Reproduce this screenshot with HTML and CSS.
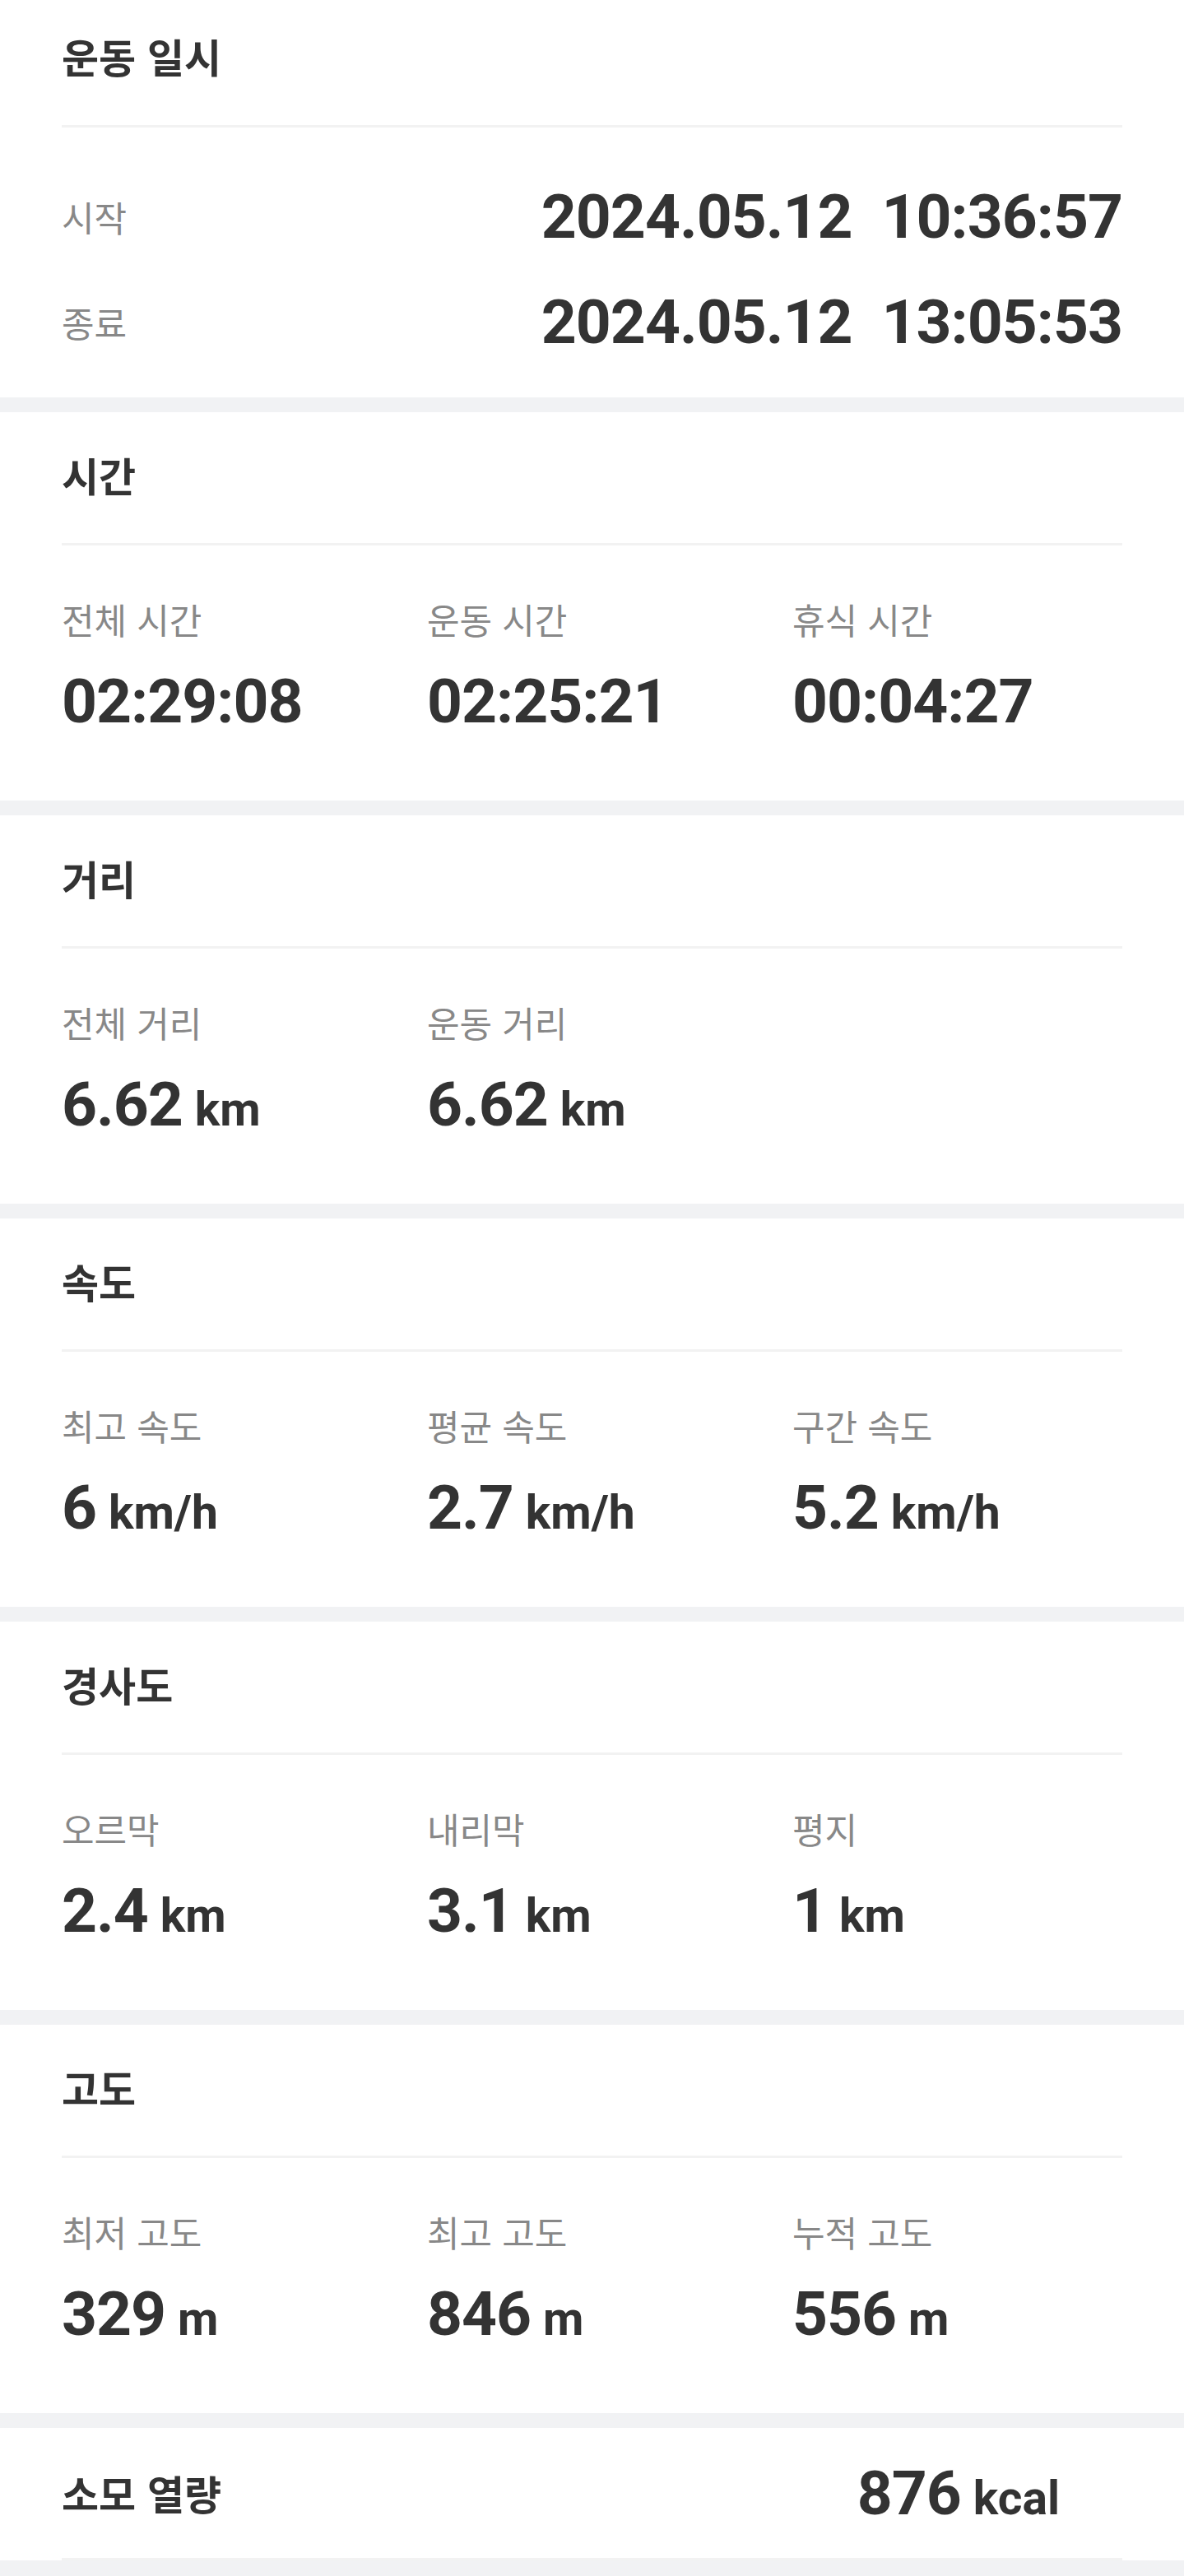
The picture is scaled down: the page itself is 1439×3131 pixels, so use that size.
FILE: index.html
```html
<!DOCTYPE html>
<html lang="ko">
<head>
<meta charset="utf-8">
<title>운동 기록</title>
<link rel="stylesheet" href="styles.css">
</head>
<body>
<main class="page">
  <section class="card card--first">
    <header class="card__head"><h2 class="card__title">운동 일시</h2></header>
    <div class="card__rule"></div>
    <div class="dates">
      <div class="dates__row">
        <span class="label">시작</span>
        <span class="datetime"><span class="num">2024.05.12</span><span class="num">10:36:57</span></span>
      </div>
      <div class="dates__row">
        <span class="label">종료</span>
        <span class="datetime"><span class="num">2024.05.12</span><span class="num">13:05:53</span></span>
      </div>
    </div>
  </section>

  <section class="card">
    <header class="card__head"><h2 class="card__title">시간</h2></header>
    <div class="card__rule"></div>
    <div class="stats">
      <div class="stat"><div class="label">전체 시간</div><div class="value"><span class="num">02:29:08</span></div></div>
      <div class="stat"><div class="label">운동 시간</div><div class="value"><span class="num">02:25:21</span></div></div>
      <div class="stat"><div class="label">휴식 시간</div><div class="value"><span class="num">00:04:27</span></div></div>
    </div>
  </section>

  <section class="card">
    <header class="card__head"><h2 class="card__title">거리</h2></header>
    <div class="card__rule"></div>
    <div class="stats">
      <div class="stat"><div class="label">전체 거리</div><div class="value"><span class="num">6.62</span><span class="unit">km</span></div></div>
      <div class="stat"><div class="label">운동 거리</div><div class="value"><span class="num">6.62</span><span class="unit">km</span></div></div>
    </div>
  </section>

  <section class="card">
    <header class="card__head"><h2 class="card__title">속도</h2></header>
    <div class="card__rule"></div>
    <div class="stats">
      <div class="stat"><div class="label">최고 속도</div><div class="value"><span class="num">6</span><span class="unit">km/h</span></div></div>
      <div class="stat"><div class="label">평균 속도</div><div class="value"><span class="num">2.7</span><span class="unit">km/h</span></div></div>
      <div class="stat"><div class="label">구간 속도</div><div class="value"><span class="num">5.2</span><span class="unit">km/h</span></div></div>
    </div>
  </section>

  <section class="card">
    <header class="card__head"><h2 class="card__title">경사도</h2></header>
    <div class="card__rule"></div>
    <div class="stats">
      <div class="stat"><div class="label">오르막</div><div class="value"><span class="num">2.4</span><span class="unit">km</span></div></div>
      <div class="stat"><div class="label">내리막</div><div class="value"><span class="num">3.1</span><span class="unit">km</span></div></div>
      <div class="stat"><div class="label">평지</div><div class="value"><span class="num">1</span><span class="unit">km</span></div></div>
    </div>
  </section>

  <section class="card">
    <header class="card__head"><h2 class="card__title">고도</h2></header>
    <div class="card__rule"></div>
    <div class="stats">
      <div class="stat"><div class="label">최저 고도</div><div class="value"><span class="num">329</span><span class="unit">m</span></div></div>
      <div class="stat"><div class="label">최고 고도</div><div class="value"><span class="num">846</span><span class="unit">m</span></div></div>
      <div class="stat"><div class="label">누적 고도</div><div class="value"><span class="num">556</span><span class="unit">m</span></div></div>
    </div>
  </section>

  <section class="card card--inline">
    <div class="inline-row">
      <h2 class="card__title">소모 열량</h2>
      <div class="value value--kcal"><span class="num">876</span><span class="unit">kcal</span></div>
    </div>
    <div class="card__rule"></div>
  </section>
</main>
</body>
</html>
```

FILE: styles.css
```css
* { box-sizing: border-box; }

html, body {
  margin: 0;
  padding: 0;
}

body {
  background: #f1f2f4;
  color: #333333;
  font-family: "Noto Sans CJK KR", "Noto Sans", sans-serif;
}

.page {
  display: flex;
  flex-direction: column;
  gap: 18px;
}

.card {
  background: #ffffff;
  height: 472px;
}

.card--first {
  height: 483px;
}

.card__head {
  padding: 44px 75px 51px;
}

.card--first .card__head {
  padding: 36px 75px 52px;
}

.card__title {
  margin: 0;
  font-size: 49px;
  line-height: 64px;
  font-weight: 700;
  color: #333333;
}

.card__rule {
  height: 3px;
  margin: 0 75px;
  background: #f2f2f2;
}

.label {
  font-size: 43px;
  line-height: 56px;
  color: #888888;
  font-weight: 400;
}

.num {
  font-family: Roboto, "Liberation Sans", sans-serif;
  font-weight: 700;
  font-size: 75px;
  line-height: 80px;
  letter-spacing: -1px;
  color: #333333;
}

.unit {
  font-family: Roboto, "Liberation Sans", sans-serif;
  font-weight: 700;
  font-size: 57px;
  line-height: 80px;
  color: #333333;
  margin-left: 15px;
}

/* 운동 일시 */
.dates {
  padding: 44px 75px 0;
}

.dates__row {
  height: 128px;
  display: flex;
  align-items: center;
  justify-content: space-between;
}

.datetime {
  display: flex;
  gap: 36px;
}

/* stats grid */
.stats {
  display: grid;
  grid-template-columns: repeat(3, 1fr);
  padding: 61px 32px 0 75px;
}

.value {
  margin-top: 32px;
  display: flex;
  align-items: baseline;
  white-space: nowrap;
}

/* 소모 열량 */
.card--inline {
  height: 161px;
}

.inline-row {
  height: 158px;
  display: flex;
  align-items: center;
  justify-content: space-between;
  padding: 0 151px 0 75px;
}

.value--kcal {
  margin-top: 6px;
}
```
